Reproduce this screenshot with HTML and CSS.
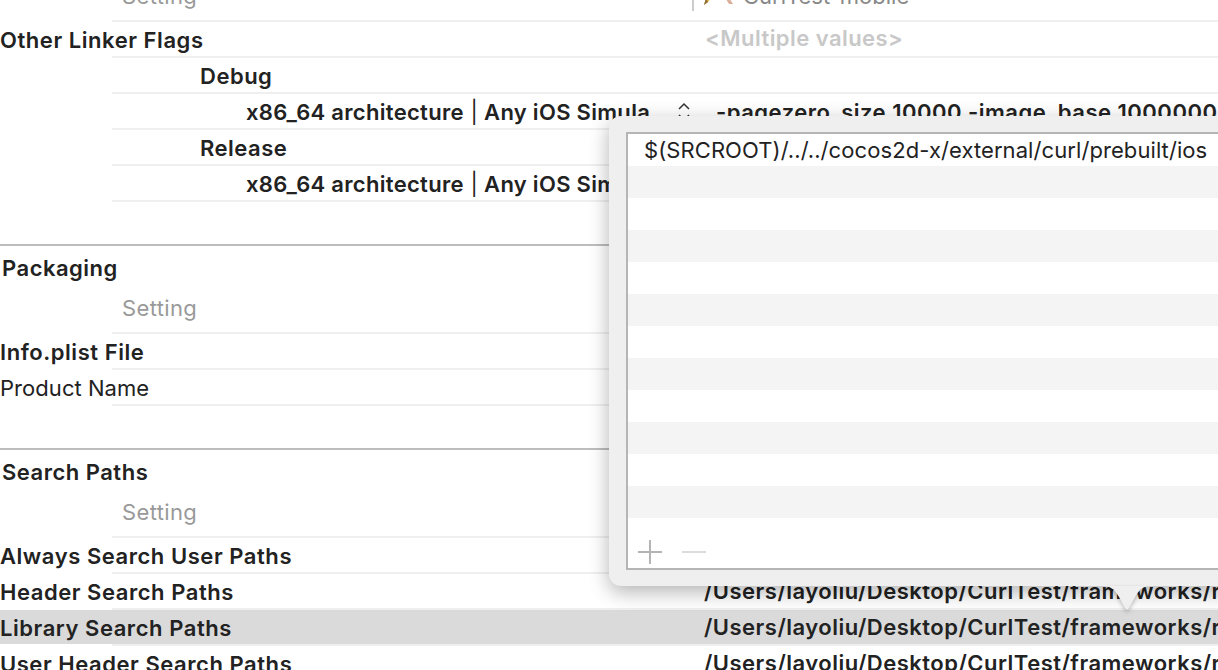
FILE: index.html
```html
<!DOCTYPE html>
<html lang="en">
<head>
<meta charset="utf-8">
<title>Build Settings</title>
<link rel="stylesheet" href="styles.css">
</head>
<body>
<main class="settings">
  <div class="row header-row">
    <span class="name setting-col">Setting</span>
    <span class="value target"><span class="divider"></span>
      <svg class="hammer" width="32" height="20" viewBox="0 0 32 20"><path d="M1 19 L3 12 L11 3 L13 5 L5 16Z" fill="#e8bb3c"/><path d="M1 19 L3 12 L5 16Z" fill="#8a6d3b"/><path d="M17 3 L20 2 L30 18 L26 18Z" fill="#d8b09c"/></svg>
      <span class="target-name">CurlTest-mobile</span></span>
  </div>
  <div class="row">
    <span class="name bold">Other Linker Flags</span>
    <span class="value multi">&lt;Multiple values&gt;</span>
  </div>
  <div class="row"><span class="name bold lvl1">Debug</span></div>
  <div class="row">
    <span class="name bold lvl2">x86_64 architecture <span class="sep">|</span> Any iOS Simula</span>
    <svg class="stepper" width="14" height="20" viewBox="0 0 14 20"><path d="M2 7 L7 2 L12 7M2 13 L7 18 L12 13" fill="none" stroke="#333" stroke-width="1.5"/></svg>
    <span class="value flags">-pagezero_size 10000 -image_base 100000000</span>
  </div>
  <div class="row"><span class="name bold lvl1">Release</span></div>
  <div class="row"><span class="name bold lvl2">x86_64 architecture <span class="sep">|</span> Any iOS Simula</span></div>

  <section class="group">
    <h2 class="group-title">Packaging</h2>
    <div class="row header-row"><span class="name setting-col">Setting</span></div>
    <div class="row"><span class="name bold">Info.plist File</span></div>
    <div class="row"><span class="name plain">Product Name</span></div>
  </section>

  <section class="group">
    <h2 class="group-title">Search Paths</h2>
    <div class="row header-row"><span class="name setting-col">Setting</span></div>
    <div class="row"><span class="name bold">Always Search User Paths</span></div>
    <div class="row">
      <span class="name bold">Header Search Paths</span>
      <span class="value path">/Users/layoliu/Desktop/CurlTest/frameworks/runtime-src</span>
    </div>
    <div class="row selected">
      <span class="name bold">Library Search Paths</span>
      <span class="value path">/Users/layoliu/Desktop/CurlTest/frameworks/runtime-src</span>
    </div>
    <div class="row">
      <span class="name bold">User Header Search Paths</span>
      <span class="value path">/Users/layoliu/Desktop/CurlTest/frameworks/runtime-src</span>
    </div>
  </section>
</main>

<aside class="popover">
  <div class="list">
    <div class="item">$(SRCROOT)/../../cocos2d-x/external/curl/prebuilt/ios</div>
    <div class="item"></div><div class="item"></div><div class="item"></div>
    <div class="item"></div><div class="item"></div><div class="item"></div>
    <div class="item"></div><div class="item"></div><div class="item"></div>
    <div class="item"></div><div class="item"></div>
    <div class="tools">
      <svg width="24" height="24" viewBox="0 0 24 24"><path d="M12 0V24M0 12H24" stroke="#b4b4b4" stroke-width="2"/></svg>
      <svg width="24" height="24" viewBox="0 0 24 24"><path d="M0 12H24" stroke="#dcdcdc" stroke-width="2"/></svg>
    </div>
  </div>
</aside>
<svg class="arrow" width="48" height="25" viewBox="0 0 48 25"><path d="M0 0 C10 0 12 5 16 11 L22 22 Q24 25 26 22 L32 11 C36 5 38 0 48 0Z" fill="#efefef"/></svg>
</body>
</html>
```
FILE: styles.css
```css
* { box-sizing: border-box; }
html, body { margin: 0; height: 100%; overflow: hidden; background: #fff; }
body {
  position: relative;
  width: 1218px;
  height: 670px;
  font-family: Inter, "Liberation Sans", sans-serif;
  font-size: 22px;
  color: #222;
}
.settings { margin-top: -22px; }
.row {
  position: relative;
  height: 36px;
  display: flex;
  align-items: center;
  white-space: nowrap;
  overflow: hidden;
}
.row::after {
  content: "";
  position: absolute;
  left: 112px;
  right: 0;
  bottom: 0;
  height: 2px;
  background: #efefef;
}
.header-row { height: 44px; padding-bottom: 8px; }
.name { display: block; }
.bold { font-weight: 600; letter-spacing: 0.55px; }
.plain { letter-spacing: 0.05px; }
.setting-col { padding-left: 122px; color: #999; font-weight: 400; letter-spacing: 0.37px; }
.lvl1 { padding-left: 200px; letter-spacing: 0.5px; }
.lvl2 { padding-left: 246px; letter-spacing: 0.3px; }
.sep { font-weight: 400; padding-left: 1px; }
.value { position: absolute; left: 704px; font-weight: 600; letter-spacing: 0.5px; }
.target { display: flex; align-items: center; left: 692px; font-weight: 400; color: #888; }
.divider { width: 2px; height: 30px; background: #ccc; }
.hammer { margin-left: 9px; }
.target-name { margin-left: 8px; letter-spacing: 0; }
.multi { left: 705px; margin-top: -4px; color: #c8c8c8; letter-spacing: 0.45px; }
.flags { left: 716px; }
.path { margin-top: -2px; }
.stepper { position: absolute; left: 677px; top: 8px; }
.group { margin-top: 42px; border-top: 2px solid #bdbdbd; }
.group-title { margin: 0; height: 44px; padding: 8px 0 0 2px; font-size: 22px; font-weight: 600; letter-spacing: 0.5px; line-height: 28px; }
.selected { background: linear-gradient(#dadada 34px, transparent 34px); }
.popover {
  position: absolute;
  left: 609px;
  top: 116px;
  width: 640px;
  height: 470px;
  padding: 16px 0 0 17px;
  background: #efefef;
  border-radius: 12px;
  box-shadow: 0 6px 20px rgba(0,0,0,.3);
}
.list {
  height: 438px;
  border: 2px solid #b5b5b5;
  background: #fff;
}
.item { height: 32px; padding-left: 16px; line-height: 32px; font-size: 22px; color: #222; letter-spacing: 0.08px; white-space: nowrap; }
.item:nth-child(even) { background: #f4f4f4; }
.tools { display: flex; gap: 20px; padding: 22px 0 0 10px; }
.arrow {
  position: absolute;
  left: 1103px;
  top: 586px;
  filter: drop-shadow(0 2px 2px rgba(0,0,0,.25));
}
```
